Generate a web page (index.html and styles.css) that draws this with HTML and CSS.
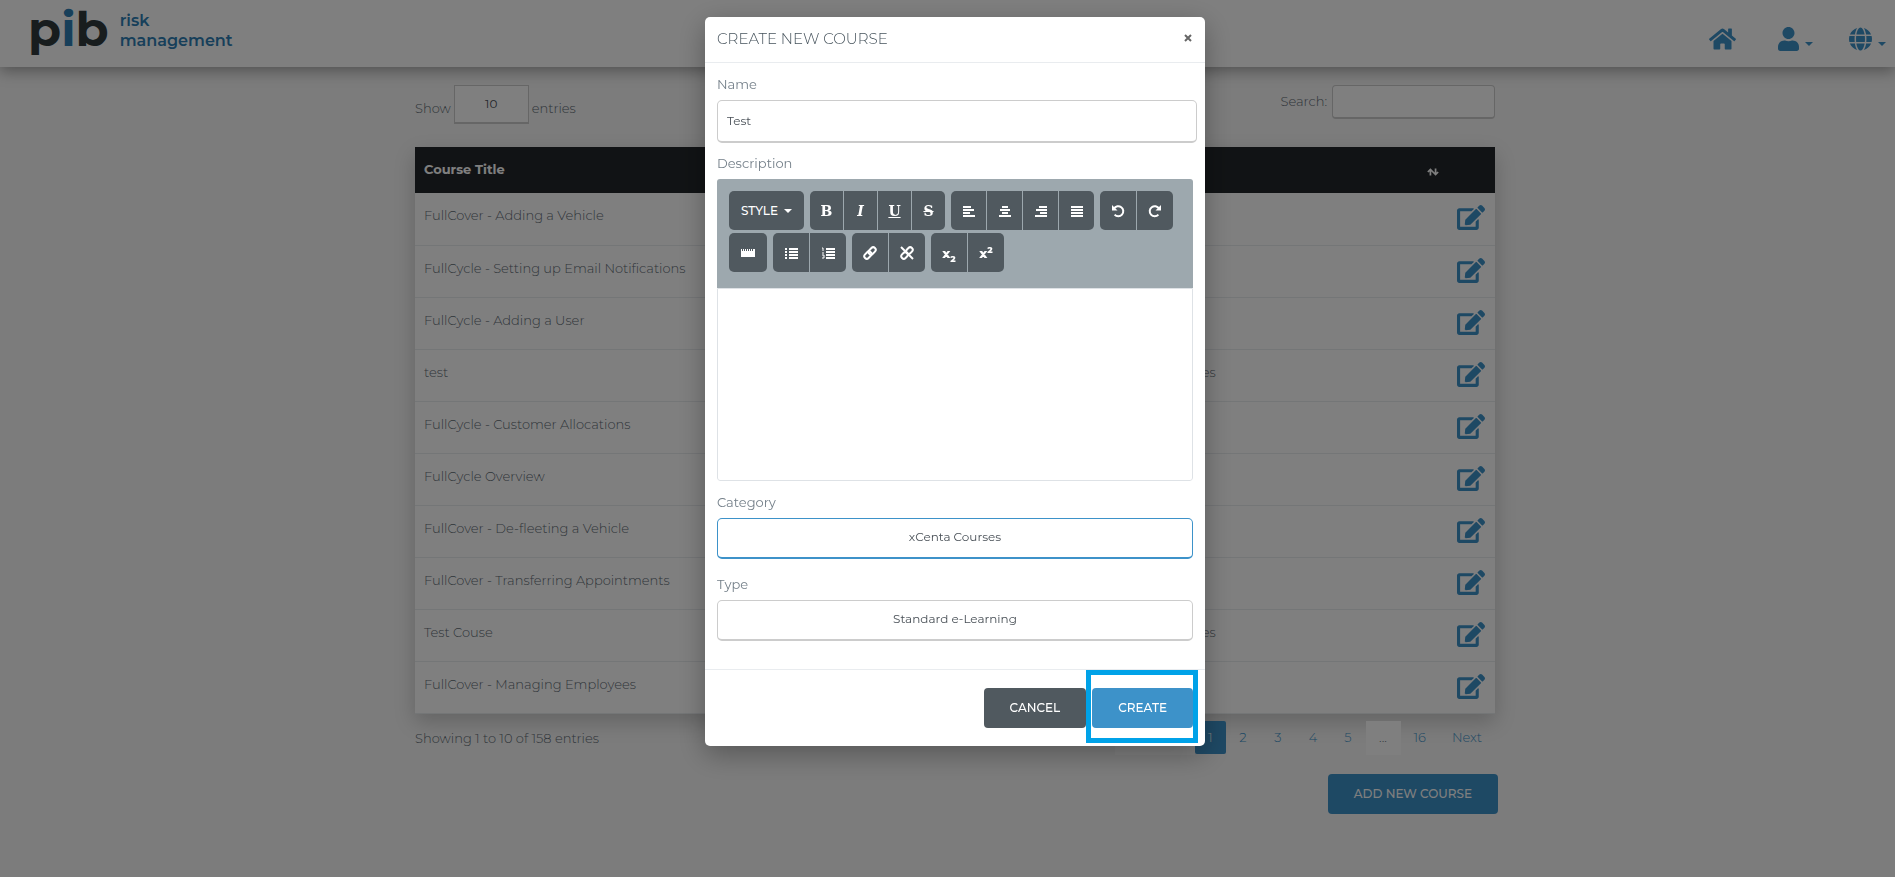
FILE: index.html
```html
<!DOCTYPE html>
<html lang="en">
<head>
    <meta charset="UTF-8">
    <title>Courses</title>
    <link rel="stylesheet" href="styles.css">
</head>
<body>

    <!-- shared icons -->
    <svg class="sprite" aria-hidden="true">
        <symbol id="edit" viewBox="0 0 576 512"><path d="M402.6 83.2l90.2 90.2c3.8 3.8 3.8 10 0 13.8L274.4 405.6l-92.8 10.3c-12.4 1.4-22.9-9.1-21.5-21.5l10.3-92.8L388.8 83.2c3.8-3.8 10-3.8 13.8 0zm162-22.9l-48.8-48.8c-15.2-15.2-39.9-15.2-55.2 0l-35.4 35.4c-3.8 3.8-3.8 10 0 13.8l90.2 90.2c3.8 3.8 10 3.8 13.8 0l35.4-35.4c15.2-15.3 15.2-40 0-55.2zM384 346.2V448H64V128h229.8c3.2 0 6.2-1.3 8.5-3.5l40-40c7.6-7.6 2.2-20.5-8.5-20.5H48C21.5 64 0 85.5 0 112v352c0 26.5 21.5 48 48 48h352c26.5 0 48-21.5 48-48V306.2c0-10.7-12.9-16-20.5-8.5l-40 40c-2.2 2.3-3.5 5.3-3.5 8.5z"/></symbol>
    </svg>

    <header class="navbar">
        <a class="logo" href="#" aria-label="pib risk management">
            <span class="logo-mark">p<span class="logo-i">i</span>b</span>
            <span class="logo-text">risk<br>management</span>
        </a>
        <nav class="nav-icons">
            <a class="home" href="#" aria-label="Home">
                <svg width="27" height="24" viewBox="0 0 576 512"><path d="M280.37 148.26L96 300.11V464a16 16 0 0 0 16 16l112.06-.29a16 16 0 0 0 15.92-16V368a16 16 0 0 1 16-16h64a16 16 0 0 1 16 16v95.64a16 16 0 0 0 16 16.05L464 480a16 16 0 0 0 16-16V300L295.67 148.26a12.19 12.19 0 0 0-15.3 0zM571.6 251.47L488 182.56V44.05a12 12 0 0 0-12-12h-56a12 12 0 0 0-12 12v72.61L318.47 43a48 48 0 0 0-61 0L4.34 251.47a12 12 0 0 0-1.6 16.9l25.5 31A12 12 0 0 0 45.15 301l235.22-193.74a12.19 12.19 0 0 1 15.3 0L530.9 301a12 12 0 0 0 16.9-1.6l25.5-31a12 12 0 0 0-1.7-16.93z"/></svg>
            </a>
            <a href="#" aria-label="Account">
                <svg width="21" height="24" viewBox="0 0 448 512"><path d="M224 256c70.7 0 128-57.3 128-128S294.7 0 224 0 96 57.3 96 128s57.3 128 128 128zm89.6 32h-16.7c-22.2 10.2-46.9 16-72.9 16s-50.6-5.8-72.9-16h-16.7C60.2 288 0 348.2 0 422.4V464c0 26.5 21.5 48 48 48h352c26.5 0 48-21.5 48-48v-41.6c0-74.2-60.2-134.4-134.4-134.4z"/></svg>
                <span class="caret"></span>
            </a>
            <a href="#" aria-label="Language">
                <svg width="23" height="24" viewBox="0 0 496 512"><path d="M336.5 160C322 70.7 287.8 8 248 8s-74 62.7-88.5 152h177zM152 256c0 22.2 1.2 43.5 3.3 64h185.3c2.1-20.5 3.3-41.8 3.3-64s-1.2-43.5-3.3-64H155.3c-2.1 20.5-3.3 41.8-3.3 64zm324.7-96c-28.6-67.9-86.5-120.4-158-141.6 24.4 33.8 41.2 84.7 50 141.6h108zM177.2 18.4C105.8 39.6 47.8 92.1 19.3 160h108c8.7-56.9 25.5-107.8 49.9-141.6zM487.4 192H372.7c2.1 21 3.3 42.5 3.3 64s-1.2 43-3.3 64h114.6c5.5-20.5 8.6-41.8 8.6-64s-3.1-43.5-8.5-64zM120 256c0-21.5 1.2-43 3.3-64H8.6C3.2 212.5 0 233.8 0 256s3.2 43.5 8.6 64h114.6c-2-21-3.2-42.5-3.2-64zm39.5 96c14.5 89.3 48.7 152 88.5 152s74-62.7 88.5-152h-177zm159.3 141.6c71.4-21.2 129.4-73.7 158-141.6h-108c-8.8 56.9-25.6 107.8-50 141.6zM19.3 352c28.6 67.9 86.5 120.4 158 141.6-24.4-33.8-41.2-84.7-50-141.6h-108z"/></svg>
                <span class="caret"></span>
            </a>
        </nav>
    </header>

    <main class="container">
        <div class="table-controls">
            <label class="length">Show
                <select><option>10</option></select>
                entries
            </label>
            <label class="search">Search: <input type="search"></label>
        </div>

        <table class="courses">
            <thead>
                <tr>
                    <th>Course Title</th>
                    <th class="col-category"><svg class="sort" width="12" height="8" viewBox="0 0 14 8"><path d="M4 8V2M1 4l3-3 3 3M10 0v6M7 4l3 3 3-3"/></svg></th>
                    <th class="col-edit"></th>
                </tr>
            </thead>
            <tbody>
                <tr><td>FullCover - Adding a Vehicle</td><td></td><td><a href="#" aria-label="Edit"><svg class="edit"><use href="#edit"/></svg></a></td></tr>
                <tr><td>FullCycle - Setting up Email Notifications</td><td></td><td><a href="#" aria-label="Edit"><svg class="edit"><use href="#edit"/></svg></a></td></tr>
                <tr><td>FullCycle - Adding a User</td><td></td><td><a href="#" aria-label="Edit"><svg class="edit"><use href="#edit"/></svg></a></td></tr>
                <tr><td>test</td><td>xCenta Courses</td><td><a href="#" aria-label="Edit"><svg class="edit"><use href="#edit"/></svg></a></td></tr>
                <tr><td>FullCycle - Customer Allocations</td><td></td><td><a href="#" aria-label="Edit"><svg class="edit"><use href="#edit"/></svg></a></td></tr>
                <tr><td>FullCycle Overview</td><td></td><td><a href="#" aria-label="Edit"><svg class="edit"><use href="#edit"/></svg></a></td></tr>
                <tr><td>FullCover - De-fleeting a Vehicle</td><td></td><td><a href="#" aria-label="Edit"><svg class="edit"><use href="#edit"/></svg></a></td></tr>
                <tr><td>FullCover - Transferring Appointments</td><td></td><td><a href="#" aria-label="Edit"><svg class="edit"><use href="#edit"/></svg></a></td></tr>
                <tr><td>Test Couse</td><td>xCenta Courses</td><td><a href="#" aria-label="Edit"><svg class="edit"><use href="#edit"/></svg></a></td></tr>
                <tr><td>FullCover - Managing Employees</td><td></td><td><a href="#" aria-label="Edit"><svg class="edit"><use href="#edit"/></svg></a></td></tr>
            </tbody>
        </table>

        <div class="table-footer">
            <p>Showing 1 to 10 of 158 entries</p>
            <ul class="pagination">
                <li class="disabled previous"></li>
                <li class="active"><a href="#">1</a></li>
                <li><a href="#">2</a></li>
                <li><a href="#">3</a></li>
                <li><a href="#">4</a></li>
                <li><a href="#">5</a></li>
                <li class="disabled"><span>...</span></li>
                <li><a href="#">16</a></li>
                <li><a href="#">Next</a></li>
            </ul>
        </div>
        <div class="page-actions">
            <button class="btn btn-primary" type="button">ADD NEW COURSE</button>
        </div>
    </main>

    <div class="backdrop">
        <form class="modal" role="dialog" aria-labelledby="modal-title">
            <div class="modal-header">
                <h1 id="modal-title">CREATE NEW COURSE</h1>
                <button class="close" type="button" aria-label="Close">
                    <svg width="8" height="8" viewBox="0 0 8 8"><path d="M1 1l6 6M7 1L1 7"/></svg>
                </button>
            </div>

            <div class="modal-body">
                <label for="name">Name</label>
                <input class="field name" id="name" type="text" value="Test">

                <label for="description">Description</label>
                <div class="editor">
                    <div class="toolbar">
                        <div class="group"><button class="style" type="button">STYLE <span class="caret"></span></button></div>
                        <div class="group serif">
                            <button type="button"><b>B</b></button>
                            <button type="button"><i>I</i></button>
                            <button type="button"><u>U</u></button>
                            <button type="button"><s>S</s></button>
                        </div>
                        <div class="group align">
                            <button type="button" aria-label="Align left"><svg width="12" height="12" viewBox="0 0 12 12"><path d="M0 2h8M0 5h11M0 8h7M0 11h12"/></svg></button>
                            <button type="button" aria-label="Center"><svg width="12" height="12" viewBox="0 0 12 12"><path d="M3 2h6M1 5h10M3 8h6M0 11h12"/></svg></button>
                            <button type="button" aria-label="Align right"><svg width="12" height="12" viewBox="0 0 12 12"><path d="M4 2h8M1 5h11M5 8h7M0 11h12"/></svg></button>
                            <button type="button" aria-label="Justify"><svg width="12" height="12" viewBox="0 0 12 12"><path d="M0 2h12M0 5h12M0 8h12M0 11h12"/></svg></button>
                        </div>
                        <div class="group">
                            <button type="button" aria-label="Undo"><svg width="14" height="14" viewBox="0 0 14 14"><path d="M3 4.6a5 5 0 1 1 .6 6"/><path class="solid" d="M1 1v5.5h5.5z"/></svg></button>
                            <button type="button" aria-label="Redo"><svg width="14" height="14" viewBox="0 0 14 14"><path d="M11 4.6a5 5 0 1 0-.6 6"/><path class="solid" d="M13 1v5.5H7.5z"/></svg></button>
                        </div>
                        <div class="group">
                            <button class="rule" type="button" aria-label="Horizontal rule"><svg width="14" height="8" viewBox="0 0 14 8"><path class="solid" d="M0 0h1v2h1V0h1v2h1V0h1v2h1V0h1v2h1V0h1v2h1V0h1v2h1V0h2v8H0z"/></svg></button>
                        </div>
                        <div class="group">
                            <button type="button" aria-label="Bulleted list"><svg width="13" height="12" viewBox="0 0 13 12"><path d="M0 2h2M0 5h2M0 8h2M0 11h2M4 2h9M4 5h9M4 8h9M4 11h9"/></svg></button>
                            <button type="button" aria-label="Numbered list"><svg width="13" height="12" viewBox="0 0 13 12"><path d="M4 2h9M4 5h9M4 8h9M4 11h9"/><path class="thin" d="M0 1h1v3M0 6h2M0 8h2v3H0"/></svg></button>
                        </div>
                        <div class="group">
                            <button type="button" aria-label="Link"><svg width="14" height="14" viewBox="0 0 14 14"><g transform="rotate(-45 7 7)"><rect x="0" y="4.5" width="8" height="5" rx="2.5"/><rect x="6" y="4.5" width="8" height="5" rx="2.5"/></g></svg></button>
                            <button type="button" aria-label="Unlink"><svg width="14" height="14" viewBox="0 0 14 14"><g transform="rotate(-45 7 7)"><rect x="0" y="4.5" width="7" height="5" rx="2.5"/><rect x="7" y="4.5" width="7" height="5" rx="2.5"/></g><path d="M1 1l12 12"/></svg></button>
                        </div>
                        <div class="group script">
                            <button type="button"><span>x<sub>2</sub></span></button>
                            <button type="button"><span>x<sup>2</sup></span></button>
                        </div>
                    </div>
                    <textarea id="description"></textarea>
                </div>

                <label for="category">Category</label>
                <select class="field focused" id="category"><option>xCenta Courses</option></select>

                <label for="type">Type</label>
                <select class="field" id="type"><option>Standard e-Learning</option></select>
            </div>

            <div class="modal-footer">
                <button class="btn btn-secondary" type="button">CANCEL</button>
                <span class="highlight"><button class="btn btn-primary" type="button">CREATE</button></span>
            </div>
        </form>
    </div>

</body>
</html>
```

FILE: styles.css
```css
* {
    box-sizing: border-box;
}
body {
    margin: 0;
    min-height: 100vh;
    background: #f8f8f8;
    color: #616b74;
    font-family: Montserrat, Inter, "Open Sans", sans-serif;
    font-size: 13px;
    font-weight: 300;
    line-height: 20px;
}
a {
    color: #3d92c9;
    text-decoration: none;
}
button, input, select, textarea {
    font: inherit;
    color: #495057;
}
svg {
    display: block;
    fill: currentColor;
}
.sprite {
    position: absolute;
    width: 0;
    height: 0;
}
.caret {
    display: inline-block;
    border: 4px solid transparent;
    border-top-color: currentColor;
    border-bottom: 0;
}

/* top bar */
.navbar {
    display: flex;
    justify-content: space-between;
    height: 67px;
    padding: 0 9px 0 28px;
    background: #fff;
    box-shadow: 0 4px 14px rgba(0, 0, 0, 0.35);
}
.logo {
    display: flex;
    gap: 11px;
    color: #2f7fb5;
}
.logo-mark {
    color: #303a3c;
    font-size: 48px;
    font-weight: 700;
    line-height: 59px;
}
.logo-i {
    color: #2f7fb5;
}
.logo-text {
    padding-top: 11px;
    font-size: 16px;
    font-weight: 600;
}
.nav-icons {
    display: flex;
    gap: 36px;
    padding-top: 27px;
}
.nav-icons a {
    display: flex;
    gap: 6px;
    height: 24px;
}
.nav-icons .home {
    margin-right: 6px;
}
.nav-icons .caret {
    margin-top: 15px;
}

/* course list */
.container {
    width: 1095px;
    max-width: 100%;
    margin: 0 auto;
    padding: 18px 0 0 15px;
}
.table-controls {
    display: flex;
    justify-content: space-between;
    align-items: flex-start;
    height: 62px;
}
.table-controls label {
    display: flex;
    gap: 5px;
}
.table-controls .length {
    gap: 3px;
    line-height: 46px;
}
.length select {
    appearance: none;
    width: 75px;
    height: 39px;
    padding: 0;
    border: 1px solid #ccc;
    border-bottom-width: 2px;
    border-radius: 0;
    background: #fff;
    font-size: 12px;
    font-weight: 400;
    line-height: 20px;
    text-align-last: center;
}
.search {
    line-height: 32px;
}
.search input {
    width: 163px;
    height: 34px;
    border: 1px solid #ccc;
    border-bottom-width: 2px;
    border-radius: 4px;
    background: #fff;
}
.courses {
    width: 100%;
    border-collapse: collapse;
    table-layout: fixed;
    background: #fff;
    box-shadow: 0 8px 20px rgba(0, 0, 0, 0.2);
}
.courses th {
    height: 46px;
    padding: 0 9px 2px;
    background: #23272b;
    color: #fff;
    font-weight: 700;
    text-align: left;
}
.courses td {
    height: 52px;
    padding: 12px 9px 0;
    border-bottom: 1px solid #e9ecef;
    vertical-align: top;
}
.courses .col-category {
    width: 340px;
}
.courses .col-edit {
    width: 47px;
}
.sort {
    margin: 5px 0 0 auto;
    fill: none;
    stroke: #fff;
    stroke-width: 2;
}
.edit {
    width: 28px;
    height: 25px;
}
.table-footer {
    display: flex;
    justify-content: space-between;
    padding-top: 7px;
}
.table-footer p {
    margin: 7px 0;
}
.pagination {
    display: flex;
    margin: 0;
    padding: 0;
    list-style: none;
    line-height: 33px;
    text-align: center;
}
.pagination a, .pagination span {
    display: block;
    min-width: 35px;
    padding: 0 13px;
}
.pagination .active a {
    min-width: 30px;
    background: #3d92c9;
    border-radius: 2px;
    color: #fff;
}
.pagination .disabled {
    background: #fff;
}
.pagination .previous {
    width: 80px;
}
.page-actions {
    display: flex;
    justify-content: flex-end;
    padding-top: 19px;
    margin-right: -3px;
}
.btn {
    height: 40px;
    padding: 0 26px;
    border: 0;
    border-radius: 4px;
    color: #fff;
    font-size: 12px;
    font-weight: 500;
}
.btn-primary {
    background: #3d92c9;
}
.btn-secondary {
    background: #50595f;
}

/* modal */
.backdrop {
    position: fixed;
    inset: 0;
    padding: 17px 0 0 15px;
    background: rgba(0, 0, 0, 0.5);
    overflow: auto;
}
.modal {
    width: 500px;
    margin: 0 auto;
    border-radius: 5px;
    background: #fff;
    box-shadow: 0 8px 28px rgba(0, 0, 0, 0.3);
    font-weight: 400;
}
.modal-header {
    display: flex;
    justify-content: space-between;
    padding: 12px 12px 13px;
    border-bottom: 1px solid #e9ecef;
}
.modal-header h1 {
    margin: 0;
    color: #46535c;
    font-size: 15px;
    font-weight: 300;
    line-height: 20px;
}
.close {
    height: 17px;
    padding: 0 1px;
    border: 0;
    background: none;
}
.close svg {
    stroke: #666;
    stroke-width: 2;
}
.modal-body {
    padding: 11px 12px 13px;
}
.modal-body label {
    display: block;
    margin-bottom: 6px;
    color: #75808a;
}
.field {
    display: block;
    width: 100%;
    height: 41px;
    margin-bottom: 15px;
    padding: 0 9px 2px;
    border: 1px solid #ccc;
    border-bottom-width: 2px;
    border-radius: 5px;
    background: #fff;
    font-size: 12px;
}
select.field {
    appearance: none;
    text-align-last: center;
}
.name {
    width: 480px;
    height: 43px;
    margin-bottom: 10px;
}
.field.focused {
    border-color: #3d92c9;
}
.editor {
    margin-bottom: 11px;
    border-radius: 3px;
    overflow: hidden;
}
.toolbar {
    display: flex;
    flex-wrap: wrap;
    align-content: flex-start;
    gap: 3px 6px;
    height: 109px;
    padding: 12px 12px 0;
    background: #9da8ae;
}
.group {
    display: flex;
    gap: 1px;
    border-radius: 5px;
    overflow: hidden;
}
.group button {
    display: flex;
    align-items: center;
    justify-content: center;
    width: 36px;
    height: 39px;
    padding: 0;
    border: 0;
    background: #50595f;
    color: #fff;
}
.group .style {
    gap: 6px;
    width: 75px;
    font-size: 12px;
    font-weight: 500;
}
.group .rule {
    width: 38px;
}
.group svg {
    fill: none;
    stroke: #fff;
    stroke-width: 2;
}
.group svg .solid {
    fill: #fff;
    stroke: none;
}
.group svg .thin {
    stroke-width: 1;
}
.serif button {
    width: 33px;
    font-family: "DejaVu Serif", "Liberation Serif", serif;
    font-size: 14px;
    font-weight: 700;
}
.align button {
    width: 35px;
}
.script button {
    font-weight: 800;
}
.script sub, .script sup {
    font-size: 9px;
    line-height: 0;
}
.editor textarea {
    display: block;
    width: 100%;
    height: 193px;
    border: 1px solid #dee2e6;
    border-radius: 0 0 3px 3px;
    resize: none;
}
.modal-footer {
    display: flex;
    justify-content: flex-end;
    gap: 6px;
    padding: 18px 12px;
    border-top: 1px solid #e9ecef;
}
.highlight {
    position: relative;
}
.highlight::after {
    content: "";
    position: absolute;
    inset: -18px -5px -15px -6px;
    border: 5px solid #00a2e8;
    pointer-events: none;
}
```
